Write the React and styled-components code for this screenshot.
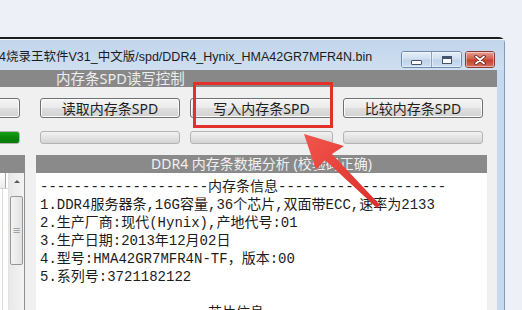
import React from 'react';
import styled, { createGlobalStyle } from 'styled-components';

const GlobalStyle = createGlobalStyle`
  html, body { margin: 0; padding: 0; background: #eef0f7; overflow: hidden; }
  body { font-family: "Noto Sans", "Noto Sans CJK SC", sans-serif; }
`;

const Page = styled.div`
  position: relative;
  width: 522px;
  height: 310px;
  overflow: hidden;
  box-sizing: border-box;
  padding-top: 37px;
  background: #eef0f7;
`;

const Window = styled.div`
  margin-left: -60px;
  width: 565px;
  height: 300px;
  box-sizing: border-box;
  border-top: 2px solid #1c1c1c;
  border-right: 1px solid #7d9cc0;
  border-top-right-radius: 6px;
  background: #c6d9ee;
  display: flex;
  flex-direction: column;
`;

const TitleBar = styled.div`
  height: 31px;
  flex: none;
  display: flex;
  align-items: flex-start;
  justify-content: space-between;
  padding: 0 9px 0 32px;
  background: linear-gradient(#c0d4eb, #cfdff1);
  box-shadow: inset 0 1px #eef4fb;
`;

const Title = styled.div`
  margin-top: 10px;
  font-family: "Liberation Sans", "Noto Sans CJK SC", sans-serif;
  font-size: 12.5px;
  line-height: 16px;
  color: #1b1b1b;
  white-space: nowrap;
`;

const Controls = styled.div`
  display: flex;
  gap: 3px;
  margin-top: 12px;
`;

const CtlGroup = styled.div`
  display: flex;
  border: 1px solid #6f89ab;
  border-radius: 3px;
  overflow: hidden;
`;

const CtlBtn = styled.div`
  width: ${p => (p.$close ? '28px' : '29px')};
  height: 15px;
  display: flex;
  align-items: center;
  justify-content: center;
  border-left: ${p => (p.$divider ? '1px solid #8aa2c0' : 'none')};
  background: ${p =>
    p.$close
      ? 'linear-gradient(#e7a195, #d4604f 45%, #c3402c 55%, #d5715f)'
      : 'linear-gradient(#e6eef8, #d0dff0 45%, #bfd2e8 55%, #cddff1)'};
  box-shadow: inset 0 0 0 1px rgba(255, 255, 255, 0.45);
`;

const CloseWrap = styled(CtlGroup)`
  border-color: #8a3a30;
`;

const MinGlyph = styled.div`
  width: 9px;
  height: 3px;
  margin-top: 6px;
  background: #fff;
  border: 1px solid #44546a;
  border-radius: 1px;
`;

const MaxGlyph = styled.div`
  width: 8px;
  height: 6px;
  background: #fff;
  border: 1px solid #44546a;
  box-shadow: inset 0 2px #44546a;
`;

const Body = styled.div`
  flex: 1;
  display: flex;
  flex-direction: column;
  margin-right: 7px;
  min-height: 0;
`;

const Band = styled.div`
  height: 17px;
  flex: none;
  background: #888888;
  color: #ededed;
  font-size: 14.5px;
  line-height: 17px;
  padding-left: 116px;
  white-space: nowrap;
`;

const Panel = styled.div`
  flex: 1;
  background: #f0f0f0;
  padding: 11px 10px 0 0;
  display: flex;
  flex-direction: column;
  min-height: 0;
`;

const Row = styled.div`
  display: flex;
  gap: 10px;
  flex: none;
  margin-top: ${p => p.$top || 0}px;
`;

const Button = styled.div`
  width: ${p => p.$w}px;
  margin-right: ${p => (p.$lead ? 10 : 0)}px;
  height: 20px;
  box-sizing: border-box;
  border: 1px solid #707070;
  border-radius: 3px;
  background: linear-gradient(#f4f4f4 0%, #ebebeb 48%, #dedede 52%, #d2d2d2 100%);
  box-shadow: inset 0 0 0 1px #fbfbfb;
  display: flex;
  align-items: center;
  justify-content: center;
  font-size: 14px;
  color: #1e1e1e;
  white-space: nowrap;
`;

const Progress = styled.div`
  width: ${p => p.$w}px;
  margin-right: ${p => (p.$lead ? 10 : 0)}px;
  height: 13px;
  box-sizing: border-box;
  border: 1px solid #b4b4b4;
  border-radius: 3px;
  background: ${p =>
    p.$done
      ? 'linear-gradient(#17a017, #0b860b 50%, #097a09)'
      : 'linear-gradient(#f2f2f2, #e4e4e4 50%, #d3d3d3)'};
`;

const Main = styled.div`
  flex: 1;
  display: flex;
  gap: 11px;
  margin-top: 11px;
  min-height: 0;
`;

const SidePane = styled.div`
  width: 85px;
  display: flex;
  flex-direction: column;
`;

const PaneHeader = styled.div`
  height: 18px;
  flex: none;
  background: #8a8a8a;
  color: #f0f0f0;
  font-size: 14px;
  line-height: 18px;
  text-align: center;
  white-space: nowrap;
  overflow: hidden;
`;

const ListBox = styled.div`
  flex: 1;
  display: flex;
  background: #fff;
  border: 1px solid #8e8f8f;
  border-top: none;
`;

const Grid = styled.div`
  flex: 1;
  display: flex;
  flex-direction: column;
`;

const GridHead = styled.div`
  height: 15px;
  display: flex;
  border-bottom: 1px solid #d5d5d5;
`;

const HeadCell = styled.div`
  width: ${p => p.$w}px;
  border-right: 1px solid #a7a7a7;
  background: linear-gradient(#fff, #ececec);
`;

const GridBody = styled.div`
  flex: 1;
  background: linear-gradient(to right, transparent 61px, #dadada 61px, #dadada 62px, transparent 62px);
`;

const Scrollbar = styled.div`
  width: 15px;
  display: flex;
  flex-direction: column;
  align-items: center;
  background: linear-gradient(to right, #e8e8e8, #f4f4f4);
  border-left: 1px solid #e2e2e2;
`;

const ScrollArrow = styled.div`
  height: 17px;
  display: flex;
  align-items: center;
  justify-content: center;
  &::after {
    content: '';
    border: 3px solid transparent;
    border-bottom: 3px solid #5a5a5a;
    border-top: none;
  }
`;

const Thumb = styled.div`
  margin-top: 6px;
  width: 13px;
  height: 69px;
  box-sizing: border-box;
  border: 1px solid #979797;
  border-radius: 2px;
  background: linear-gradient(to right, #f4f4f4, #e2e2e2);
  display: flex;
  align-items: center;
  justify-content: center;
  font-size: 9px;
  color: #6a6a6a;
  line-height: 1;
`;

const DataPane = styled.div`
  flex: 1;
  display: flex;
  flex-direction: column;
  min-width: 0;
`;

const DataBody = styled.div`
  flex: 1;
  background: #ffffff;
  padding: 5px 0 0 4px;
  font-family: "Liberation Mono", "Noto Sans CJK SC", monospace;
  font-size: 14px;
  line-height: 18px;
  color: #1c1c1c;
  white-space: pre;
  overflow: hidden;
`;

const Annotation = styled.svg`
  position: absolute;
  left: 0;
  top: 0;
  pointer-events: none;
`;

const lines = [
  '--------------------内存条信息--------------------',
  '1.DDR4服务器条,16G容量,36个芯片,双面带ECC,速率为2133',
  '2.生产厂商:现代(Hynix),产地代号:01',
  '3.生产日期:2013年12月02日',
  '4.型号:HMA42GR7MFR4N-TF，版本:00',
  '5.系列号:3721182122',
  '',
  '--------------------芯片信息--------------------',
];

const buttons = [
  { w: 80, label: '', lead: true },
  { w: 140, label: '读取内存条SPD' },
  { w: 143, label: '写入内存条SPD' },
  { w: 140, label: '比较内存条SPD' },
];

export default function App() {
  return (
    <Page>
      <GlobalStyle />
      <Window>
        <TitleBar>
          <Title>DDR4烧录王软件V31_中文版/spd/DDR4_Hynix_HMA42GR7MFR4N.bin</Title>
          <Controls>
            <CtlGroup>
              <CtlBtn><MinGlyph /></CtlBtn>
              <CtlBtn $divider><MaxGlyph /></CtlBtn>
            </CtlGroup>
            <CloseWrap>
              <CtlBtn $close>
                <svg width="12" height="10" viewBox="0 0 12 10">
                  <path d="M2 1.5 L10 8.5 M10 1.5 L2 8.5" stroke="#5a1f18" strokeWidth="3.4" strokeLinecap="round" />
                  <path d="M2 1.5 L10 8.5 M10 1.5 L2 8.5" stroke="#ffffff" strokeWidth="1.8" strokeLinecap="round" />
                </svg>
              </CtlBtn>
            </CloseWrap>
          </Controls>
        </TitleBar>
        <Body>
          <Band>内存条SPD读写控制</Band>
          <Panel>
            <Row>
              {buttons.map((b, i) => (
                <Button key={i} $w={b.w} $lead={b.lead}>{b.label}</Button>
              ))}
            </Row>
            <Row $top={13}>
              {buttons.map((b, i) => (
                <Progress key={i} $w={b.w} $lead={b.lead} $done={b.lead} />
              ))}
            </Row>
            <Main>
              <SidePane>
                <PaneHeader />
                <ListBox>
                  <Grid>
                    <GridHead>
                      <HeadCell $w={64} />
                    </GridHead>
                    <GridBody />
                  </Grid>
                  <Scrollbar>
                    <ScrollArrow />
                    <Thumb>≡</Thumb>
                  </Scrollbar>
                </ListBox>
              </SidePane>
              <DataPane>
                <PaneHeader>DDR4 内存条数据分析 (校验码正确)</PaneHeader>
                <DataBody>{lines.join('\n')}</DataBody>
              </DataPane>
            </Main>
          </Panel>
        </Body>
      </Window>
      <Annotation width="522" height="310" viewBox="0 0 522 310">
        <defs>
          <linearGradient id="arrowFill" x1="0" y1="0" x2="1" y2="1">
            <stop offset="0" stopColor="#f0554c" />
            <stop offset="1" stopColor="#dc2f28" />
          </linearGradient>
        </defs>
        <rect x="194.5" y="83.5" width="137" height="43" fill="none" stroke="#e2312b" strokeWidth="3" />
        <polygon
          points="304,134 344,146 332,154 380,205 377,208 325,160 316,170"
          fill="url(#arrowFill)"
        />
      </Annotation>
    </Page>
  );
}
